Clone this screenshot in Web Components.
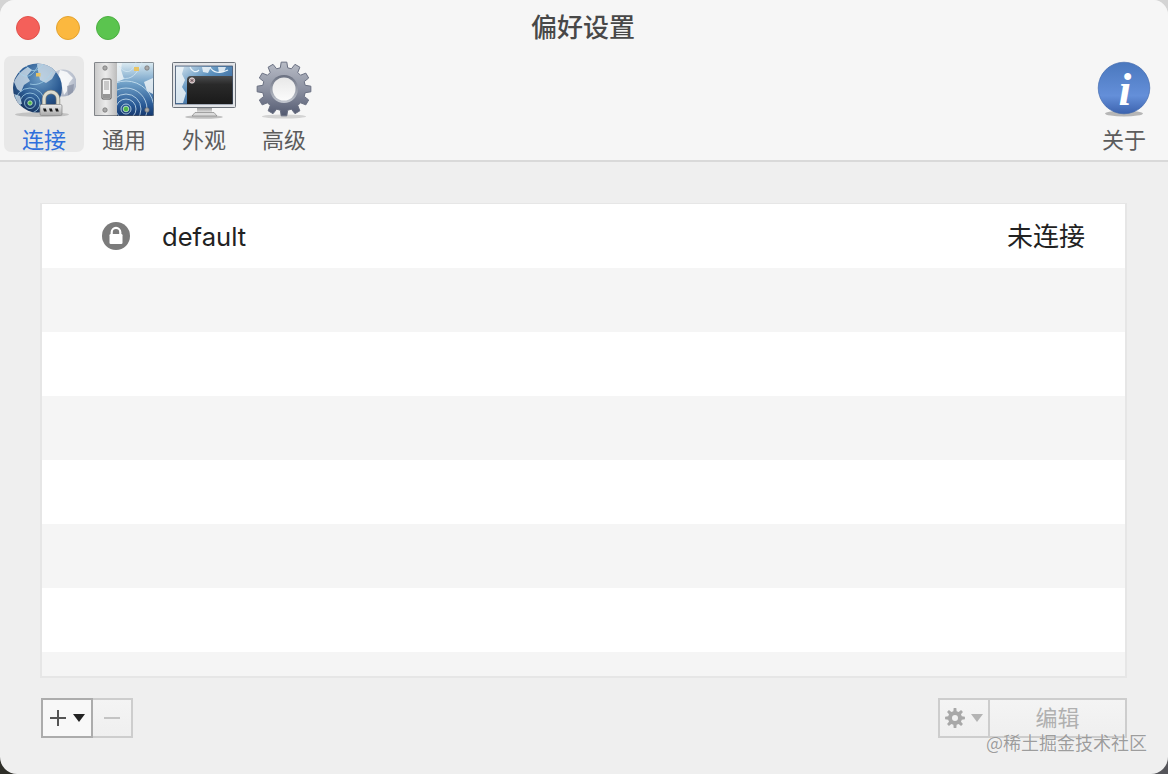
<!DOCTYPE html>
<html lang="zh">
<head>
<meta charset="utf-8">
<title>偏好设置</title>
<style>
  html, body { margin: 0; height: 100%; }
  body {
    width: 1168px;
    height: 774px;
    overflow: hidden;
    background:
      linear-gradient(#d4d4d4 50%, transparent 50%),
      linear-gradient(to right, #2e2e28 50%, #55555a 50%);
    font-family: "Noto Sans CJK SC", "Liberation Sans", sans-serif;
  }
</style>
</head>
<body>
<pref-window>
  <traffic-lights slot="lights"></traffic-lights>
  <span slot="title">偏好设置</span>

  <tool-item slot="tools" active><pref-icon name="connect"></pref-icon>连接</tool-item>
  <tool-item slot="tools"><pref-icon name="general"></pref-icon>通用</tool-item>
  <tool-item slot="tools"><pref-icon name="look"></pref-icon>外观</tool-item>
  <tool-item slot="tools"><pref-icon name="advanced"></pref-icon>高级</tool-item>
  <tool-item slot="about"><pref-icon name="about"></pref-icon>关于</tool-item>

  <conn-list>
    <conn-row name="default" status="未连接"></conn-row>
    <conn-row></conn-row>
    <conn-row></conn-row>
    <conn-row></conn-row>
    <conn-row></conn-row>
    <conn-row></conn-row>
    <conn-row></conn-row>
    <conn-row></conn-row>
  </conn-list>

  <list-actions slot="footer"></list-actions>
  <water-mark slot="mark">@稀土掘金技术社区</water-mark>
</pref-window>

<script>
class PrefWindow extends HTMLElement {
  constructor() {
    super();
    this.attachShadow({ mode: "open" }).innerHTML = `
      <style>
        :host {
          display: flex;
          flex-direction: column;
          position: relative;
          width: 1168px;
          height: 774px;
          box-sizing: border-box;
          overflow: hidden;
          border-radius: 15px 15px 17px 17px;
          background: #efefef;
        }
        header {
          height: 162px;
          box-sizing: border-box;
          flex: none;
          background: #f6f6f6;
          border-bottom: 2px solid #d9d9d9;
        }
        .bar {
          display: grid;
          grid-template-columns: 1fr auto 1fr;
          align-items: center;
          height: 56px;
          font-size: 26px;
          line-height: 38px;
          font-weight: 500;
          color: #484848;
        }
        .title { position: relative; left: -1px; top: -2px; }
        .tools { display: flex; justify-content: space-between; padding: 0 4px; }
        .group { display: flex; }
        main { padding: 41px 41px 0 40px; }
        footer { padding: 20px 41px 0; }
      </style>
      <header>
        <div class="bar">
          <div><slot name="lights"></slot></div>
          <div class="title"><slot name="title"></slot></div>
          <div></div>
        </div>
        <div class="tools">
          <div class="group"><slot name="tools"></slot></div>
          <div class="group"><slot name="about"></slot></div>
        </div>
      </header>
      <main><slot></slot></main>
      <footer><slot name="footer"></slot></footer>
      <slot name="mark"></slot>
    `;
  }
}

class TrafficLights extends HTMLElement {
  constructor() {
    super();
    this.attachShadow({ mode: "open" }).innerHTML = `
      <style>
        :host { display: flex; gap: 16px; padding-left: 16px; }
        i { width: 24px; height: 24px; box-sizing: border-box; border-radius: 50%; border: 1px solid; }
        .r { background: #f4605a; border-color: #e2524c; }
        .y { background: #fbb83f; border-color: #e4a32f; }
        .g { background: #5bc44f; border-color: #4cb042; }
      </style>
      <i class="r"></i><i class="y"></i><i class="g"></i>
    `;
  }
}

class ToolItem extends HTMLElement {
  constructor() {
    super();
    this.attachShadow({ mode: "open" }).innerHTML = `
      <style>
        :host {
          display: flex;
          flex-direction: column;
          align-items: center;
          width: 80px;
          height: 96px;
          box-sizing: border-box;
          padding-top: 2px;
          border-radius: 7px;
          font-size: 22px;
          line-height: 32px;
          color: #5c5c5c;
        }
        :host([active]) { background: #e8e8e8; color: #2f6fdc; }
      </style>
      <slot></slot>
    `;
  }
}

function gearPath(cx, cy, outer, root, teeth, wide) {
  const step = Math.PI * 2 / teeth;
  const w = wide || .17;
  let d = "";
  for (let n = 0; n < teeth; n++) {
    const a = n * step - Math.PI / 2;
    const pts = [[root, a - step * (w + .13)], [outer, a - step * w], [outer, a + step * w], [root, a + step * (w + .13)]];
    pts.forEach((p, k) => {
      const x = (cx + p[0] * Math.cos(p[1])).toFixed(2);
      const y = (cy + p[0] * Math.sin(p[1])).toFixed(2);
      d += (n === 0 && k === 0 ? "M" : "L") + x + " " + y;
    });
  }
  return d + "Z";
}

// every icon is drawn on a 64x64 box
const ICONS = {
  connect: `
    <defs>
      <radialGradient id="sea" cx=".55" cy=".3" r=".85"><stop offset="0" stop-color="#6f9ec6"/><stop offset=".5" stop-color="#2c5c94"/><stop offset="1" stop-color="#122548"/></radialGradient>
      <radialGradient id="grey" cx=".45" cy=".4" r=".7"><stop offset="0" stop-color="#e6e9ee"/><stop offset="1" stop-color="#a2abbd"/></radialGradient>
      <linearGradient id="steel" x1="0" y1="0" x2="0" y2="1"><stop offset="0" stop-color="#ececec"/><stop offset="1" stop-color="#a8a8a8"/></linearGradient>
      <clipPath id="globe"><circle cx="25.500" cy="30" r="24.500"/></clipPath>
      <clipPath id="small"><circle cx="51" cy="25" r="13.500"/></clipPath>
    </defs>
    <ellipse cx="30" cy="56.500" rx="27" ry="2.500" fill="#000" opacity=".16"/>
    <circle cx="51" cy="25" r="13.500" fill="url(#grey)"/>
    <g clip-path="url(#small)">
      <path d="M48 12l7 2 6 6-4 5-2 8-3 4-2-9-5-5z" fill="#f8f9fb" opacity=".9"/>
      <path d="M55 28l7-2-1 9-5 3z" fill="#7d869b" opacity=".6"/>
    </g>
    <circle cx="25.500" cy="30" r="24.500" fill="url(#sea)"/>
    <g clip-path="url(#globe)">
      <path d="M2 24c3-7 8-12 14-15l4 3-5 6 3 5-6 4-3 7-4-3zM25 6c8-1 15 2 19 8l-4 7-6 4-6-3-2-9zM2 36l6 2 2 8-4 0z" fill="#cfdde8" opacity=".8"/>
      <g fill="none" stroke="#a9d6ec" stroke-width="1" opacity=".75">
        <circle cx="18" cy="45" r="5.500"/><circle cx="18" cy="45" r="10"/><circle cx="18" cy="45" r="15"/>
        <path d="M5 12c8 10 15 8 22-6M13 6c5 9 13 9 19-1M18 26c8 2 16-2 22-12"/>
      </g>
      <path d="M30 60c10-2 17-8 20-18l3 16z" fill="#0f2147" opacity=".6"/>
    </g>
    <rect x="24" y="15" width="4.500" height="3.500" fill="#e8c465"/>
    <circle cx="18" cy="45" r="2.200" fill="#4fb648" stroke="#cfeccf" stroke-width=".8"/>
    <path d="M32 47v-6a7 7 0 0 1 14 0v6" fill="none" stroke="#7e7f78" stroke-width="4.400"/>
    <path d="M32 47v-6a7 7 0 0 1 14 0v6" fill="none" stroke="#dcdcd0" stroke-width="3"/>
    <rect x="28" y="46.500" width="22" height="11" rx="1.500" fill="url(#steel)" stroke="#888" stroke-width=".7"/>
    <path d="M31 50.500h2.800l1 3h-2.800zM37 50.500h2.800l1 3h-2.800zM43 50.500h2.800l1 3h-2.800z" fill="#1a1a1a"/>`,
  general: `
    <defs>
      <linearGradient id="plate" x1="0" y1="0" x2="1" y2="0"><stop offset="0" stop-color="#c9c9c9"/><stop offset=".5" stop-color="#ebebeb"/><stop offset="1" stop-color="#bcbcbc"/></linearGradient>
      <linearGradient id="map" x1="0" y1="0" x2="0" y2="1"><stop offset="0" stop-color="#dcebf2"/><stop offset=".4" stop-color="#6f9fc6"/><stop offset=".8" stop-color="#2a5a96"/><stop offset="1" stop-color="#173a70"/></linearGradient>
      <clipPath id="pane"><rect x="25" y="4.600" width="36.400" height="52.800"/></clipPath>
    </defs>
    <rect x="2" y="4" width="60" height="54" rx="1.500" fill="#50555c"/>
    <rect x="2.600" y="4.600" width="22.400" height="52.800" fill="url(#plate)"/>
    <rect x="25" y="4.600" width="36.400" height="52.800" fill="url(#map)"/>
    <g clip-path="url(#pane)">
      <path d="M25 5h5l-1 7 3 9-7 3zM52 24l9-4v16l-6-3z" fill="#eef3f6" opacity=".85"/>
      <g fill="none" stroke="#d6ebf6" stroke-width="1" opacity=".75">
        <circle cx="34" cy="51" r="5"/><circle cx="34" cy="51" r="10"/><circle cx="34" cy="51" r="15"/><circle cx="34" cy="51" r="21"/><circle cx="34" cy="51" r="28"/>
        <path d="M27 8c6 8 13 8 17-4M30 20c9 2 15-3 20-16"/>
      </g>
    </g>
    <rect x="42" y="9" width="5" height="4" fill="#e8c465"/>
    <circle cx="34" cy="51" r="2.800" fill="#4fb648" stroke="#cfeccf" stroke-width=".8"/>
    <g fill="#a9a9a9" stroke="#6f6f6f" stroke-width=".7">
      <circle cx="13" cy="10" r="2.200"/><circle cx="13" cy="52" r="2.200"/><circle cx="55" cy="10" r="2.200"/><circle cx="55" cy="52" r="2.200"/>
    </g>
    <rect x="10" y="21" width="9" height="20" rx="1" fill="#f4f4f4" stroke="#4c4c4c" stroke-width="1"/>
    <rect x="12" y="23" width="5" height="9" fill="#c9c9c9"/>
    <rect x="11" y="36" width="7" height="4" fill="#969696"/>`,
  look: `
    <defs>
      <linearGradient id="sky" x1="0" y1="0" x2="1" y2="1"><stop offset="0" stop-color="#dbe9f2"/><stop offset=".4" stop-color="#5f93bf"/><stop offset="1" stop-color="#1c4682"/></linearGradient>
      <linearGradient id="term" x1="0" y1="0" x2="0" y2="1"><stop offset="0" stop-color="#4a4b4d"/><stop offset=".3" stop-color="#2a2a2a"/><stop offset="1" stop-color="#1a1a1a"/></linearGradient>
      <linearGradient id="neck" x1="0" y1="0" x2="0" y2="1"><stop offset="0" stop-color="#8e8e8e"/><stop offset="1" stop-color="#ededed"/></linearGradient>
    </defs>
    <ellipse cx="32" cy="59" rx="19" ry="1.800" fill="#000" opacity=".22"/>
    <rect x="25" y="49" width="15" height="6" fill="url(#neck)"/>
    <path d="M20 58l3-3.500h19l3 3.500z" fill="#dcdcdc" stroke="#858585" stroke-width=".7"/>
    <rect x=".5" y="4.500" width="63" height="45" rx="1" fill="#e3e5e8" stroke="#6c727a"/>
    <rect x="3.500" y="8" width="57" height="38" fill="url(#sky)" stroke="#33435e" stroke-width=".7"/>
    <path d="M4 9h8l-2 7 3 6-3 7 4 6-3 10H4zM30 9h9l-3 6-5-1zM46 9h8l-2 5-5 1z" fill="#eef4f8" opacity=".85"/>
    <g fill="none" stroke="#eaf4fa" stroke-width="1.200">
      <path d="M18 9c2 5 6 6 9 3M38 9c3 6 10 7 18 3"/>
    </g>
    <path d="M15 22q0-4 4-4h41.500v28H15z" fill="url(#term)"/>
    <circle cx="20" cy="22.500" r="2.700" fill="#c9a9ad" stroke="#e6e6e6" stroke-width=".8"/>
    <path d="M18.800 21.300l2.400 2.400m0-2.400l-2.400 2.400" stroke="#3a3a3a" stroke-width=".8"/>`,
  advanced: `
    <defs>
      <linearGradient id="cog" x1="0" y1="0" x2="0" y2="1"><stop offset="0" stop-color="#b8bcc6"/><stop offset=".5" stop-color="#8d92a2"/><stop offset="1" stop-color="#525970"/></linearGradient>
      <linearGradient id="rim" x1="0" y1="0" x2="0" y2="1"><stop offset="0" stop-color="#6a7080"/><stop offset="1" stop-color="#c4c8d1"/></linearGradient>
      <linearGradient id="hole" x1="0" y1="0" x2="0" y2="1"><stop offset="0" stop-color="#e8e8e8"/><stop offset="1" stop-color="#fbfbfb"/></linearGradient>
    </defs>
    <ellipse cx="32" cy="58.500" rx="22" ry="2" fill="#000" opacity=".14"/>
    <path d="${gearPath(32, 31, 27, 21.500, 12, .2)}" fill="url(#cog)" stroke="#6a7082" stroke-width="1" stroke-linejoin="round"/>
    <circle cx="32" cy="31" r="14" fill="url(#rim)"/>
    <circle cx="32" cy="31" r="11.500" fill="url(#hole)"/>`,
  about: `
    <defs>
      <linearGradient id="ball" x1="0" y1="0" x2="0" y2="1"><stop offset="0" stop-color="#4a78be"/><stop offset=".65" stop-color="#648fd9"/><stop offset="1" stop-color="#3c63ae"/></linearGradient>
    </defs>
    <ellipse cx="32" cy="55.500" rx="19" ry="3" fill="#000" opacity=".26"/>
    <circle cx="32" cy="30" r="25.800" fill="url(#ball)" stroke="#3560a8" stroke-width=".6"/>
    <text x="33" y="47" text-anchor="middle" font-family="'Liberation Serif', serif" font-style="italic" font-weight="700" font-size="46" fill="#fff">i</text>`
};

class PrefIcon extends HTMLElement {
  constructor() {
    super();
    this.attachShadow({ mode: "open" });
  }
  connectedCallback() {
    this.shadowRoot.innerHTML = `
      <style>
        :host { display: block; width: 64px; height: 64px; }
        svg { display: block; }
      </style>
      <svg width="64" height="64" viewBox="0 0 64 64">${ICONS[this.getAttribute("name")]}</svg>
    `;
  }
}

class ConnList extends HTMLElement {
  constructor() {
    super();
    this.attachShadow({ mode: "open" }).innerHTML = `
      <style>
        :host {
          display: block;
          height: 475px;
          box-sizing: border-box;
          overflow: hidden;
          border: 2px solid #e6e6e6;
          border-top-width: 1px;
          background: #f5f5f5;
        }
        ::slotted(conn-row:nth-child(even)) { background: #f5f5f5; }
      </style>
      <slot></slot>
    `;
  }
}

class ConnRow extends HTMLElement {
  constructor() {
    super();
    this.attachShadow({ mode: "open" });
  }
  connectedCallback() {
    const name = this.getAttribute("name");
    const status = this.getAttribute("status");
    this.shadowRoot.innerHTML = `
      <style>
        :host {
          display: flex;
          align-items: center;
          height: 64px;
          padding: 0 40px 0 60px;
          background: #fff;
          color: #222;
          font-size: 26px;
        }
        svg { flex: none; margin-right: 32px; }
        .name { flex: 1; font-family: "Inter", "Liberation Sans", sans-serif; font-size: 25.600px; }
        .status { position: relative; top: -2px; }
      </style>
      ${name ? `
        <svg width="28" height="28" viewBox="0 0 28 28">
          <circle cx="14" cy="14" r="14" fill="#7b7b7b"/>
          <path d="M9.700 12.500v-2.300a4.300 4.300 0 0 1 8.600 0v2.300" fill="none" stroke="#fff" stroke-width="2.200"/>
          <rect x="7.500" y="12" width="13" height="10" rx="1.200" fill="#fff"/>
        </svg>
        <span class="name">${name}</span>
        <span class="status">${status}</span>` : ""}
    `;
  }
}

class ListActions extends HTMLElement {
  constructor() {
    super();
    let gear = gearPath(10, 10, 10, 7, 8);
    this.attachShadow({ mode: "open" }).innerHTML = `
      <style>
        :host { display: flex; justify-content: space-between; height: 40px; }
        .group { display: flex; }
        .btn {
          display: flex;
          align-items: center;
          justify-content: center;
          box-sizing: border-box;
          height: 40px;
          border: 2px solid #cdcdcd;
          background: linear-gradient(#f4f4f4, #efefef);
          color: #b0b0b0;
          font-size: 22px;
        }
        .add { width: 52px; gap: 6px; border-color: #acacac; background: #f8f8f8; }
        .remove { width: 40px; border-left-width: 0; }
        .cog { width: 52px; gap: 6px; }
        .edit { width: 137px; border-left-width: 0; padding-bottom: 4px; }
        .down { width: 0; height: 0; border: 6px solid transparent; border-bottom-width: 0; border-top: 8px solid currentColor; }
      </style>
      <div class="group">
        <div class="btn add" style="color:#222">
          <svg width="18" height="18" viewBox="0 0 18 18"><path d="M9 1v16M1 9h16" stroke="#555" stroke-width="2"/></svg>
          <i class="down"></i>
        </div>
        <div class="btn remove">
          <svg width="18" height="18" viewBox="0 0 18 18"><path d="M1 9h16" stroke="#c4c4c4" stroke-width="2"/></svg>
        </div>
      </div>
      <div class="group">
        <div class="btn cog" style="color:#b4b4b4">
          <svg width="20" height="20" viewBox="0 0 20 20"><path d="${gear}" fill="#a8a8a8"/><circle cx="10" cy="10" r="3" fill="#f1f1f1"/></svg>
          <i class="down"></i>
        </div>
        <div class="btn edit">编辑</div>
      </div>
    `;
  }
}

class WaterMark extends HTMLElement {
  constructor() {
    super();
    this.attachShadow({ mode: "open" }).innerHTML = `
      <style>
        :host {
          position: absolute;
          right: 21px;
          bottom: 18px;
          font-size: 18px;
          line-height: 27px;
          color: rgba(140, 140, 140, .85);
          text-shadow: 0 0 1px rgba(255, 255, 255, .8);
        }
      </style>
      <slot></slot>
    `;
  }
}

customElements.define("pref-window", PrefWindow);
customElements.define("traffic-lights", TrafficLights);
customElements.define("tool-item", ToolItem);
customElements.define("pref-icon", PrefIcon);
customElements.define("conn-list", ConnList);
customElements.define("conn-row", ConnRow);
customElements.define("list-actions", ListActions);
customElements.define("water-mark", WaterMark);
</script>
</body>
</html>
